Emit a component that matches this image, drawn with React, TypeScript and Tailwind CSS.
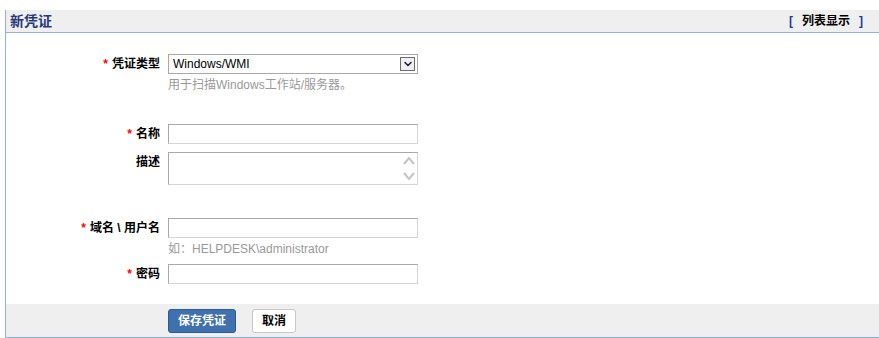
import { ChevronDown } from "lucide-react";

const font = { fontFamily: '"Liberation Sans", Arial, "Noto Sans CJK SC", sans-serif' };

function Label({ text, required }: { text: string; required?: boolean }) {
  return (
    <div className="w-[162px] pr-[8px] text-right font-bold text-[12px] text-black leading-[20px] shrink-0">
      {required && <span className="text-[#ff0000] mr-[4px]">*</span>}
      {text}
    </div>
  );
}

function TextInput() {
  return <div className="w-[250px] h-[20px] border border-[#a9a9a9] border-b-[#d4d4d4] border-r-[#d4d4d4] bg-white" />;
}

export default function App() {
  return (
    <div className="w-[879px] h-[338px] bg-white pt-[10px]" style={font}>
      <div className="ml-[5px] border-l border-[#8fb0e6] border-b border-b-[#8fb0e6]">
        <div className="h-[23px] bg-[#efefef] border-b border-[#8fb0e6] flex items-center justify-between pl-[4px] pr-[16px]">
          <div className="text-[14px] font-bold text-[#27397a]">新凭证</div>
          <div className="text-[12px] font-bold text-black">
            <span className="text-[#1a3aa8]">[</span>
            <span className="mx-[9px]">列表显示</span>
            <span className="text-[#1a3aa8]">]</span>
          </div>
        </div>

        <div className="pt-[21px]">
          <div className="flex">
            <Label text="凭证类型" required />
            <div>
              <div className="w-[250px] h-[20px] border border-[#a9a9a9] bg-white flex items-center justify-between pl-[4px] pr-[2px]">
                <span className="text-[12px] text-black">Windows/WMI</span>
                <div className="w-[15px] h-[14px] border border-[#6b6b6b] bg-[#f0f0f0] flex items-center justify-center">
                  <ChevronDown size={12} strokeWidth={3} className="text-[#1a1a40]" />
                </div>
              </div>
              <div className="text-[12px] text-[#999999] mt-[3px] leading-[16px]">用于扫描Windows工作站/服务器。</div>
            </div>
          </div>

          <div className="flex mt-[31px]">
            <Label text="名称" required />
            <TextInput />
          </div>

          <div className="flex mt-[8px]">
            <Label text="描述" />
            <div className="w-[250px] h-[33px] border border-[#a9a9a9] border-b-[#d4d4d4] border-r-[#d4d4d4] bg-white flex justify-end">
              <div className="w-[16px] flex flex-col items-center justify-between py-[1px]">
                <svg width="14" height="14" viewBox="0 0 14 14"><path d="M2 10 L7 4 L12 10" fill="none" stroke="#c4c4c4" strokeWidth="2" /></svg>
                <svg width="14" height="14" viewBox="0 0 14 14"><path d="M2 4 L7 10 L12 4" fill="none" stroke="#c4c4c4" strokeWidth="2" /></svg>
              </div>
            </div>
          </div>

          <div className="flex mt-[33px]">
            <Label text="域名 \ 用户名" required />
            <div>
              <TextInput />
              <div className="text-[12px] text-[#999999] mt-[3px] leading-[16px]">如：HELPDESK\administrator</div>
            </div>
          </div>

          <div className="flex mt-[7px]">
            <Label text="密码" required />
            <TextInput />
          </div>
        </div>

        <div className="mt-[20px] h-[33px] bg-[#efefef] flex items-center pl-[162px] gap-[16px]">
          <button className="h-[24px] w-[68px] rounded-[3px] bg-[#3e71ad] border border-[#2d5a91] text-white text-[12px] font-bold">
            保存凭证
          </button>
          <button className="h-[24px] w-[44px] rounded-[3px] bg-white border border-[#c8c8c8] text-black text-[12px] font-bold">
            取消
          </button>
        </div>
      </div>
    </div>
  );
}
